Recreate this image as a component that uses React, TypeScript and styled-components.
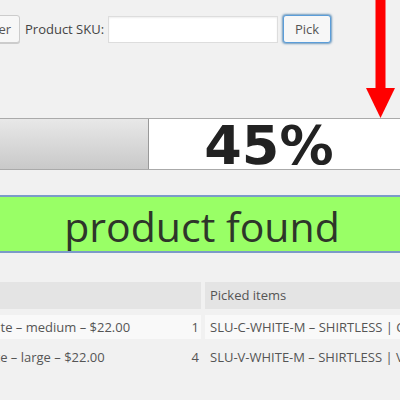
import React from 'react';
import styled, { createGlobalStyle } from 'styled-components';

const GlobalStyle = createGlobalStyle`
    html, body {
        margin: 0;
        padding: 0;
        background: #f1f1f1;
        overflow: hidden;
    }
    body {
        font-family: "Open Sans", "Liberation Sans", sans-serif;
        font-size: 13px;
        color: #444;
    }
`;

interface IRow {
    name: string;
    qty: number;
    picked: string;
}

const rows: IRow[] = [
    { name: "Crew Tee – White – medium – $22.00", qty: 1, picked: "SLU-C-WHITE-M – SHIRTLESS | Crew Tee – White – medium" },
    { name: "Vest Tee – White – large – $22.00", qty: 4, picked: "SLU-V-WHITE-M – SHIRTLESS | Vest Tee – White – large" },
];

const progress = 45;

export default function App() {
    return (
        <Page>
            <GlobalStyle />
            <Toolbar>
                <Button>Filter</Button>
                <Label htmlFor="sku">Product SKU:</Label>
                <SkuInput id="sku" type="text" />
                <PickButton>Pick</PickButton>
            </Toolbar>

            <Arrow width="30" height="120" viewBox="0 0 30 120">
                <rect x="9.5" y="0" width="10" height="92" fill="#f00" />
                <polygon points="0,88 29,88 14.5,118" fill="#f00" />
            </Arrow>

            <Progress>
                <ProgressFill style={{ width: progress + '%' }} />
                <ProgressLabel>{progress}%</ProgressLabel>
            </Progress>

            <Notice>product found</Notice>

            <Table>
                <HeadCell />
                <HeadCell>Picked items</HeadCell>
                {rows.map((r, i) => (
                    <React.Fragment key={i}>
                        <NameCell odd={i % 2 == 0}>
                            <span>{r.name}</span>
                            <span>{r.qty}</span>
                        </NameCell>
                        <Cell odd={i % 2 == 0}>{r.picked}</Cell>
                    </React.Fragment>
                ))}
            </Table>
        </Page>
    );
}

const Page = styled.div`
    position: relative;
    width: 400px;
    height: 400px;
    overflow: hidden;
    display: flex;
    flex-direction: column;
`;

const Toolbar = styled.div`
    display: flex;
    align-items: center;
    gap: 5px;
    padding-top: 15px;
    height: 28px;
`;

const Button = styled.button`
    box-sizing: border-box;
    width: 60px;
    height: 28px;
    margin-left: -40px;
    padding: 0 8px 1px 0;
    text-align: right;
    font-family: "Open Sans", "Liberation Sans", sans-serif;
    font-size: 13px;
    color: #555;
    background: #f7f7f7;
    border: 1px solid #ccc;
    border-radius: 3px;
    box-shadow: 0 1px 0 #ccc;
`;

const Label = styled.label`
    color: #444;
    font-size: 13px;
`;

const SkuInput = styled.input`
    box-sizing: border-box;
    width: 170px;
    height: 27px;
    margin: 0 0 0 -1px;
    background: #fff;
    border: 1px solid #ddd;
    box-shadow: inset 0 1px 2px rgba(0, 0, 0, 0.07);
`;

const PickButton = styled.button`
    box-sizing: border-box;
    width: 48px;
    height: 28px;
    padding: 0 0 1px;
    font-family: "Open Sans", "Liberation Sans", sans-serif;
    font-size: 13px;
    color: #555;
    background: #f7f7f7;
    border: 1px solid #5b9dd9;
    border-radius: 3px;
    box-shadow: 0 0 2px 1px rgba(60, 120, 170, 0.7);
`;

const Arrow = styled.svg`
    position: absolute;
    left: 366px;
    top: 0;
`;

const Progress = styled.div`
    box-sizing: border-box;
    display: flex;
    height: 52px;
    margin: 75px -20px 0 -75px;
    background: #fff;
    border: 1px solid #aaa;
`;

const ProgressFill = styled.div`
    flex-shrink: 0;
    background: linear-gradient(to bottom, #e8e8e8, #c9c9c9);
    border-right: 1px solid #999;
`;

const ProgressLabel = styled.div`
    flex: 1;
    display: flex;
    align-items: center;
    justify-content: center;
    padding: 4px 30px 0 0;
    font-family: "DejaVu Sans", sans-serif;
    font-weight: bold;
    font-size: 54px;
    line-height: 1;
    color: #222;
`;

const Notice = styled.div`
    height: 54px;
    margin: 25px -12px 0 -8px;
    background: #99ff66;
    border-top: 2px solid #7b9bc8;
    border-bottom: 2px solid #7b9bc8;
    text-align: center;
    font-size: 41px;
    line-height: 58px;
    color: #2e362a;
    overflow: hidden;
`;

const Table = styled.div`
    display: grid;
    grid-template-columns: 304px 1fr;
    grid-template-rows: 27px;
    grid-auto-rows: 24px;
    column-gap: 4px;
    row-gap: 6px;
    margin: 29px -100px 0 -103px;
`;

const HeadCell = styled.div`
    padding: 0 5px;
    line-height: 27px;
    background: #e4e4e4;
    color: #555;
    white-space: nowrap;
`;

const Cell = styled.div<{ odd?: boolean }>`
    padding: 0 5px;
    line-height: 24px;
    background: ${p => p.odd ? '#f9f9f9' : 'transparent'};
    color: #555;
    white-space: nowrap;
`;

const NameCell = styled(Cell)`
    display: flex;
    justify-content: space-between;
    padding: 0 2px 0 11px;
`;
